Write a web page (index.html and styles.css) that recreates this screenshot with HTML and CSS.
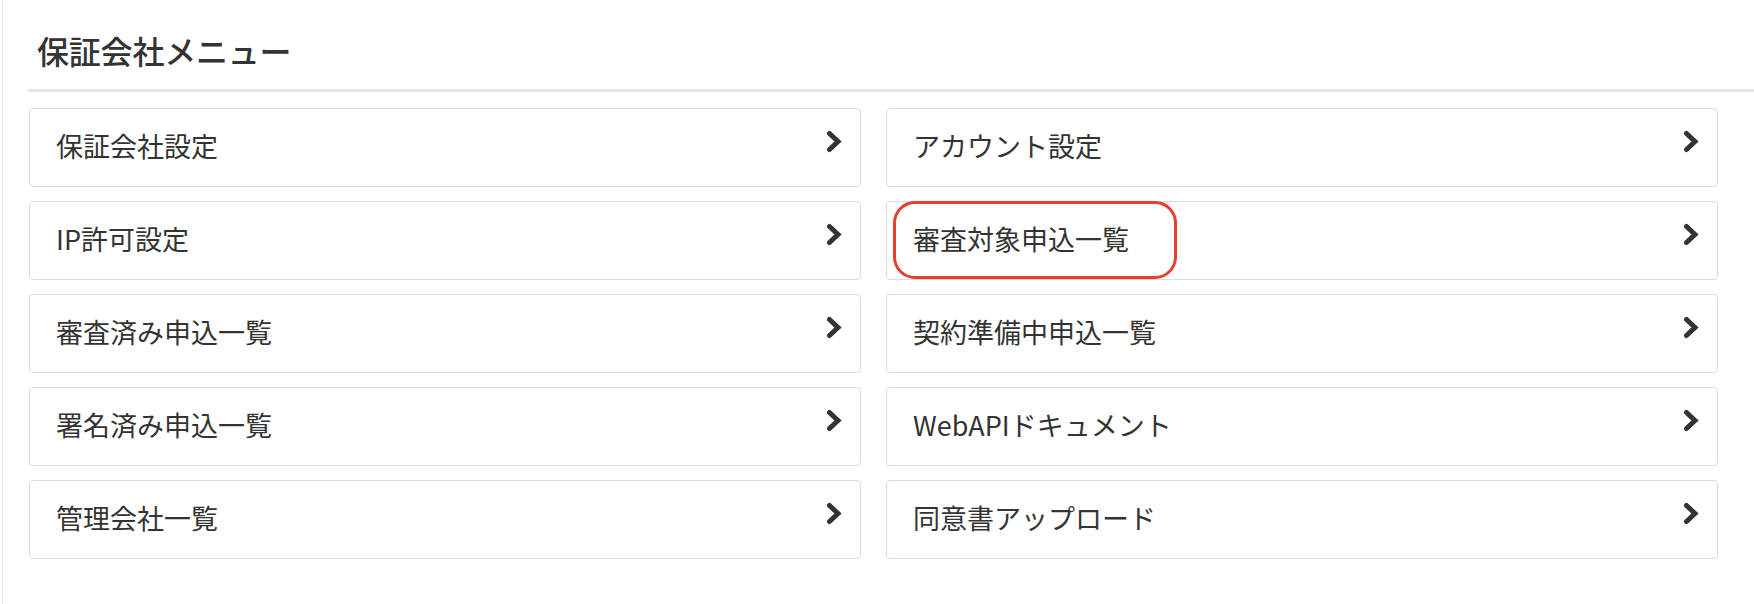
FILE: index.html
```html
<!DOCTYPE html>
<html lang="ja">
<head>
<meta charset="utf-8">
<title>保証会社メニュー</title>
<link rel="stylesheet" href="styles.css">
</head>
<body>
<div class="panel">
  <h1 class="title">保証会社メニュー</h1>
  <div class="rule"></div>
  <div class="menu">
    <a class="card" href="#"><span class="label">保証会社設定</span><svg class="chev" viewBox="0 0 16 23"><polyline points="3.5,3.5 12,11.5 3.5,19.5"/></svg></a>
    <a class="card" href="#"><span class="label">アカウント設定</span><svg class="chev" viewBox="0 0 16 23"><polyline points="3.5,3.5 12,11.5 3.5,19.5"/></svg></a>
    <a class="card" href="#"><span class="label">IP許可設定</span><svg class="chev" viewBox="0 0 16 23"><polyline points="3.5,3.5 12,11.5 3.5,19.5"/></svg></a>
    <a class="card" href="#"><span class="label">審査対象申込一覧</span><svg class="chev" viewBox="0 0 16 23"><polyline points="3.5,3.5 12,11.5 3.5,19.5"/></svg><span class="highlight"></span></a>
    <a class="card" href="#"><span class="label">審査済み申込一覧</span><svg class="chev" viewBox="0 0 16 23"><polyline points="3.5,3.5 12,11.5 3.5,19.5"/></svg></a>
    <a class="card" href="#"><span class="label">契約準備中申込一覧</span><svg class="chev" viewBox="0 0 16 23"><polyline points="3.5,3.5 12,11.5 3.5,19.5"/></svg></a>
    <a class="card" href="#"><span class="label">署名済み申込一覧</span><svg class="chev" viewBox="0 0 16 23"><polyline points="3.5,3.5 12,11.5 3.5,19.5"/></svg></a>
    <a class="card" href="#"><span class="label">WebAPIドキュメント</span><svg class="chev" viewBox="0 0 16 23"><polyline points="3.5,3.5 12,11.5 3.5,19.5"/></svg></a>
    <a class="card" href="#"><span class="label">管理会社一覧</span><svg class="chev" viewBox="0 0 16 23"><polyline points="3.5,3.5 12,11.5 3.5,19.5"/></svg></a>
    <a class="card" href="#"><span class="label">同意書アップロード</span><svg class="chev" viewBox="0 0 16 23"><polyline points="3.5,3.5 12,11.5 3.5,19.5"/></svg></a>
  </div>
</div>
</body>
</html>
```

FILE: styles.css
```css
html, body {
  margin: 0;
  padding: 0;
  background: #ffffff;
}

body {
  font-family: "Noto Sans CJK JP", "Noto Sans", sans-serif;
  color: #333333;
  padding-left: 2px;
  height: 604px;
  box-sizing: border-box;
}

.panel {
  border-left: 1px solid #e4e4e4;
  height: 100%;
  padding-left: 25px;
  padding-top: 30px;
  box-sizing: border-box;
}

.title {
  margin: 0;
  padding-left: 9px;
  font-size: 32px;
  line-height: 40px;
  font-weight: 500;
  color: #333333;
  letter-spacing: -0.2px;
}

.rule {
  margin-top: 19px;
  height: 3px;
  background: #e6e6eb;
}

.menu {
  margin-top: 16px;
  margin-left: 1px;
  margin-right: 36px;
  display: grid;
  grid-template-columns: 1fr 1fr;
  column-gap: 25px;
  row-gap: 14px;
}

.card {
  position: relative;
  display: flex;
  align-items: center;
  justify-content: space-between;
  height: 79px;
  box-sizing: border-box;
  border: 1px solid #dcdcdc;
  border-radius: 4px;
  padding: 0 18px 4px 26px;
  text-decoration: none;
  color: #333333;
}

.label {
  font-size: 27px;
  line-height: 36px;
}

.chev {
  align-self: flex-start;
  margin-top: 21px;
  width: 16px;
  height: 23px;
  flex: none;
}

.chev polyline {
  fill: none;
  stroke: #333333;
  stroke-width: 5;
  stroke-linecap: round;
  stroke-linejoin: miter;
}

.highlight {
  position: absolute;
  left: 6px;
  top: -1px;
  width: 284px;
  height: 78px;
  box-sizing: border-box;
  border: 3px solid #e4412c;
  border-radius: 22px;
  pointer-events: none;
}
```
